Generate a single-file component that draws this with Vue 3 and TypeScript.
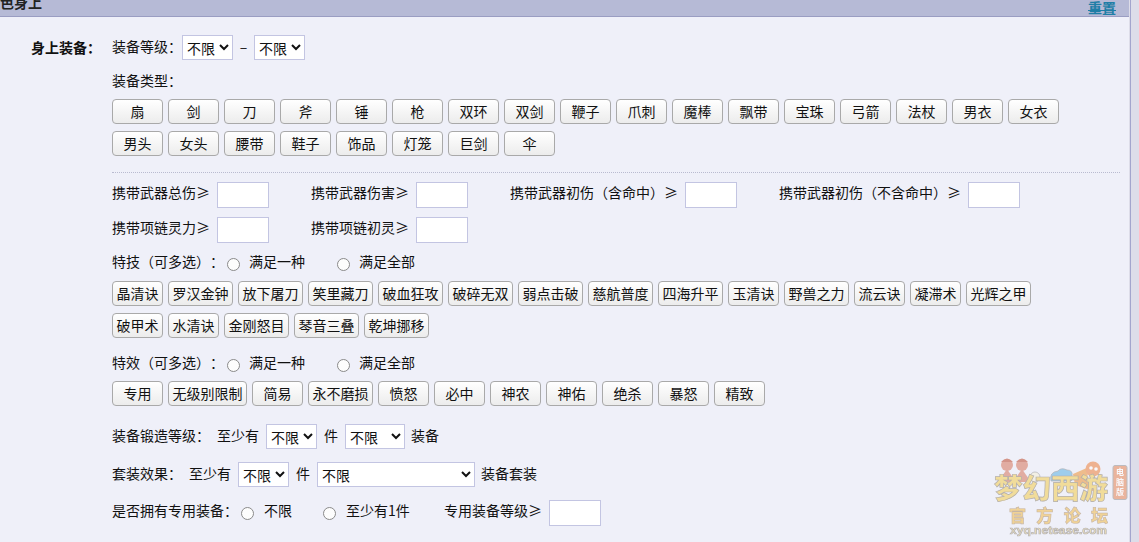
<script setup lang="ts">
const equipTypes: string[] = ['扇','剑','刀','斧','锤','枪','双环','双剑','鞭子','爪刺','魔棒','飘带','宝珠','弓箭','法杖','男衣','女衣','男头','女头','腰带','鞋子','饰品','灯笼','巨剑','伞']
const skills: string[] = ['晶清诀','罗汉金钟','放下屠刀','笑里藏刀','破血狂攻','破碎无双','弱点击破','慈航普度','四海升平','玉清诀','野兽之力','流云诀','凝滞术','光辉之甲','破甲术','水清诀','金刚怒目','琴音三叠','乾坤挪移']
const effects: string[] = ['专用','无级别限制','简易','永不磨损','愤怒','必中','神农','神佑','绝杀','暴怒','精致']
const stats: string[] = ['携带武器总伤≥','携带武器伤害≥','携带武器初伤（含命中）≥','携带武器初伤（不含命中）≥']
const stats2: string[] = ['携带项链灵力≥','携带项链初灵≥']
</script>

<template>
  <div class="page">
    <div class="main">
      <header class="bar">
        <span class="bar-title">色身上</span>
        <a class="reset">重置</a>
      </header>
      <section class="panel">
        <div class="side">身上装备：</div>
        <div class="content">
          <div class="row h25">
            <span>装备等级：</span>
            <select class="sel s51"><option>不限</option></select>
            <span class="dash">–</span>
            <select class="sel s51"><option>不限</option></select>
          </div>
          <div class="label-row type-label">装备类型：</div>
          <div class="btns">
            <button v-for="t in equipTypes" :key="t" class="btn">{{ t }}</button>
          </div>
          <div class="divider"></div>
          <div class="row stats">
            <label v-for="s in stats" :key="s" class="stat">
              <span>{{ s }}</span><input class="num" type="text" />
            </label>
          </div>
          <div class="row stats second">
            <label v-for="s in stats2" :key="s" class="stat">
              <span>{{ s }}</span><input class="num" type="text" />
            </label>
          </div>
          <div class="row radios skills-label">
            <span>特技（可多选）：</span>
            <input class="radio" type="radio" name="a" /><span class="opt">满足一种</span>
            <input class="radio" type="radio" name="a" /><span class="opt">满足全部</span>
          </div>
          <div class="btns skills">
            <button v-for="t in skills" :key="t" class="btn">{{ t }}</button>
          </div>
          <div class="row radios effects-label">
            <span>特效（可多选）：</span>
            <input class="radio" type="radio" name="b" /><span class="opt">满足一种</span>
            <input class="radio" type="radio" name="b" /><span class="opt">满足全部</span>
          </div>
          <div class="btns effects">
            <button v-for="t in effects" :key="t" class="btn">{{ t }}</button>
          </div>
          <div class="row h25 forge">
            <span class="m7">装备锻造等级：</span>
            <span class="m7">至少有</span>
            <select class="sel s51 m7"><option>不限</option></select>
            <span class="m7">件</span>
            <select class="sel s60 m6"><option>不限</option></select>
            <span>装备</span>
          </div>
          <div class="row h25 suit">
            <span class="m7">套装效果：</span>
            <span class="m7">至少有</span>
            <select class="sel s51 m7"><option>不限</option></select>
            <span class="m7">件</span>
            <select class="sel s158 m6"><option>不限</option></select>
            <span>装备套装</span>
          </div>
          <div class="row own">
            <span>是否拥有专用装备：</span>
            <input class="radio own-r1" type="radio" name="c" /><span class="own-t1">不限</span>
            <input class="radio own-r2" type="radio" name="c" /><span class="own-t2">至少有1件</span>
            <span class="own-t3">专用装备等级≥</span><input class="num" type="text" />
          </div>
        </div>
      </section>
    </div>
    <div class="gutter"></div>
    <svg class="logo" viewBox="0 0 179 102" width="179" height="102" aria-label="梦幻西游 官方论坛">
      <defs>
        <filter id="soft" x="-5%" y="-5%" width="110%" height="110%"><feGaussianBlur stdDeviation="0.4" /></filter>
      </defs>
      <g filter="url(#soft)" opacity="0.6">
        <g fill="#d9806a">
          <circle cx="47" cy="25" r="6" /><circle cx="62" cy="25" r="6" />
          <path d="M38 42 L47 29 L56 42 Z" /><path d="M53 42 L62 29 L71 42 Z" />
        </g>
        <g fill="#c2583f">
          <path d="M41 22 q6 -7 12 0 z" /><path d="M56 22 q6 -7 12 0 z" />
        </g>
        <path d="M91 41 q-2 -9 7 -10 q3 -4 9 -1 q6 0 5 6 q3 4 -2 5 z" fill="#6bb7e4" stroke="#888" stroke-width=".7" />
        <circle cx="75" cy="37" r="5" fill="#f5efd8" stroke="#888" stroke-width=".7" />
        <path d="M113 34 l16 -7 l-2 12 l9 13 l-21 -7 z" fill="#ee9a45" />
        <circle cx="133" cy="29" r="7.500" fill="#ee8a4c" />
        <circle cx="131" cy="28" r="1.800" fill="#fff" /><circle cx="136" cy="29" r="1.800" fill="#fff" />
        <text x="34" y="59" class="logo-main" textLength="114" lengthAdjust="spacingAndGlyphs">梦幻西游</text>
        <rect x="153" y="25.500" width="14" height="34" rx="2" fill="#e88d5e" stroke="#999" stroke-width="1" />
        <text x="160" y="35" class="logo-badge">电</text>
        <text x="160" y="45" class="logo-badge">脑</text>
        <text x="160" y="55" class="logo-badge">版</text>
        <text x="49" y="82" class="logo-forum" textLength="99" lengthAdjust="spacing">官方论坛</text>
        <text x="50" y="94" class="logo-url" textLength="97" lengthAdjust="spacingAndGlyphs">xyq.netease.com</text>
      </g>
    </svg>
  </div>
</template>

<style>
html, body { margin: 0; overflow: hidden; background: #dddde9; }
</style>

<style scoped>
.page {
  position: relative;
  display: flex;
  width: 1139px;
  height: 542px;
  overflow: hidden;
  font: 14px/20px "Noto Sans CJK SC", "Liberation Sans", sans-serif;
  text-spacing-trim: space-all;
  color: #111;
}
.main {
  width: 1129px;
  height: 542px;
  background: #eff0f9;
  flex: none;
}
.gutter {
  flex: 1;
  margin-left: 1px;
  border-left: 1px solid #a3a5cd;
  background: #dddde9;
}
.bar {
  height: 16px;
  background: #b6bad6;
  border-bottom: 1px solid #9a9dc2;
  display: flex;
  align-items: flex-end;
  justify-content: space-between;
  overflow: hidden;
}
.bar-title { font-weight: 700; line-height: 20px; margin-bottom: 4px; color: #222; }
.reset {
  font-weight: 700;
  color: #1f7ea6;
  line-height: 14px;
  margin: 0 13px 5px 0;
  border-bottom: 1px solid #1f7ea6;
  height: 10px;
  display: block;
}
.panel { display: flex; padding-top: 18px; }
.side {
  width: 112px;
  padding-left: 31px;
  box-sizing: border-box;
  flex: none;
  white-space: nowrap;
  font-weight: 700;
  line-height: 24px;
}
.content { width: 1008px; flex: none; }
.row { display: flex; align-items: flex-start; white-space: nowrap; }
.h25 { height: 25px; line-height: 23px; }
.dash { width: 21px; text-align: center; }
.type-label { margin-top: 10px; }
.btns {
  display: flex;
  flex-wrap: wrap;
  gap: 7px 5px;
  width: 960px;
  margin-top: 9px;
}
.btn {
  min-width: 51px;
  height: 25px;
  box-sizing: border-box;
  padding: 0 3.5px;
  border: 1px solid #a9a9a9;
  border-radius: 4px;
  background: linear-gradient(#ffffff, #ececec);
  font: inherit;
  line-height: 21px;
  color: #111;
  text-align: center;
}
.divider { border-top: 1px dotted #b9bbd0; margin-top: 16px; }
.stats { margin-top: 9px; height: 26px; gap: 42px; }
.stat { display: flex; align-items: flex-start; }
.num {
  width: 52px;
  height: 26px;
  box-sizing: border-box;
  margin: 0 0 0 7px;
  border: 1px solid #c3c5e2;
  background: #fff;
  padding: 0 4px;
  border-radius: 0;
  outline: none;
}
.radios { height: 20px; }
.skills-label { margin-top: 8px; }
.skills { margin-top: 10px; }
.effects-label { margin-top: 14px; }
.effects { margin-top: 9px; }
.radio {
  appearance: none;
  box-sizing: border-box;
  width: 13px;
  height: 13px;
  margin: 7px 9px 0 3px;
  flex: none;
  border: 1px solid #8a8a8a;
  border-radius: 50%;
  background: #fdfdfd;
}
.opt { width: 85px; }
.sel {
  height: 25px;
  box-sizing: border-box;
  border: 1px solid #c3c5e2;
  background-color: #fff;
  border-radius: 0;
  font: 14px "Noto Sans CJK SC", sans-serif;
  color: #111;
  padding: 0;
  outline: none;
}
.s51 { width: 51px; }
.s60 { width: 60px; }
.s158 { width: 158px; }
.m6 { margin-right: 6px; }
.m7 { margin-right: 7px; }
.forge { margin-top: 18px; }
.suit { margin-top: 13px; }
.own { margin-top: 13px; height: 26px; }
.own-r1 { margin-right: 10px; }
.own-t1 { margin-right: 28px; }
.own-r2 { margin-right: 10px; }
.own-t2 { margin-right: 35px; width: 63px; }
.logo { position: absolute; left: 960px; top: 440px; pointer-events: none; }
.logo-main {
  font: 900 28px "Noto Sans CJK SC", sans-serif;
  fill: #f3cf5b;
  stroke: #8b8378;
  stroke-width: 0.7px;
}
.logo-badge {
  font: 700 8px "Noto Sans CJK SC", sans-serif;
  fill: #fff;
  text-anchor: middle;
}
.logo-forum {
  font: 900 17px "Noto Sans CJK SC", sans-serif;
  fill: #f2bf55;
  stroke: #a98e70;
  stroke-width: 0.6px;
}
.logo-url {
  font: 700 11px "Liberation Sans", sans-serif;
  fill: #f2d98b;
  stroke: #8f8a88;
  stroke-width: 0.7px;
}
</style>
